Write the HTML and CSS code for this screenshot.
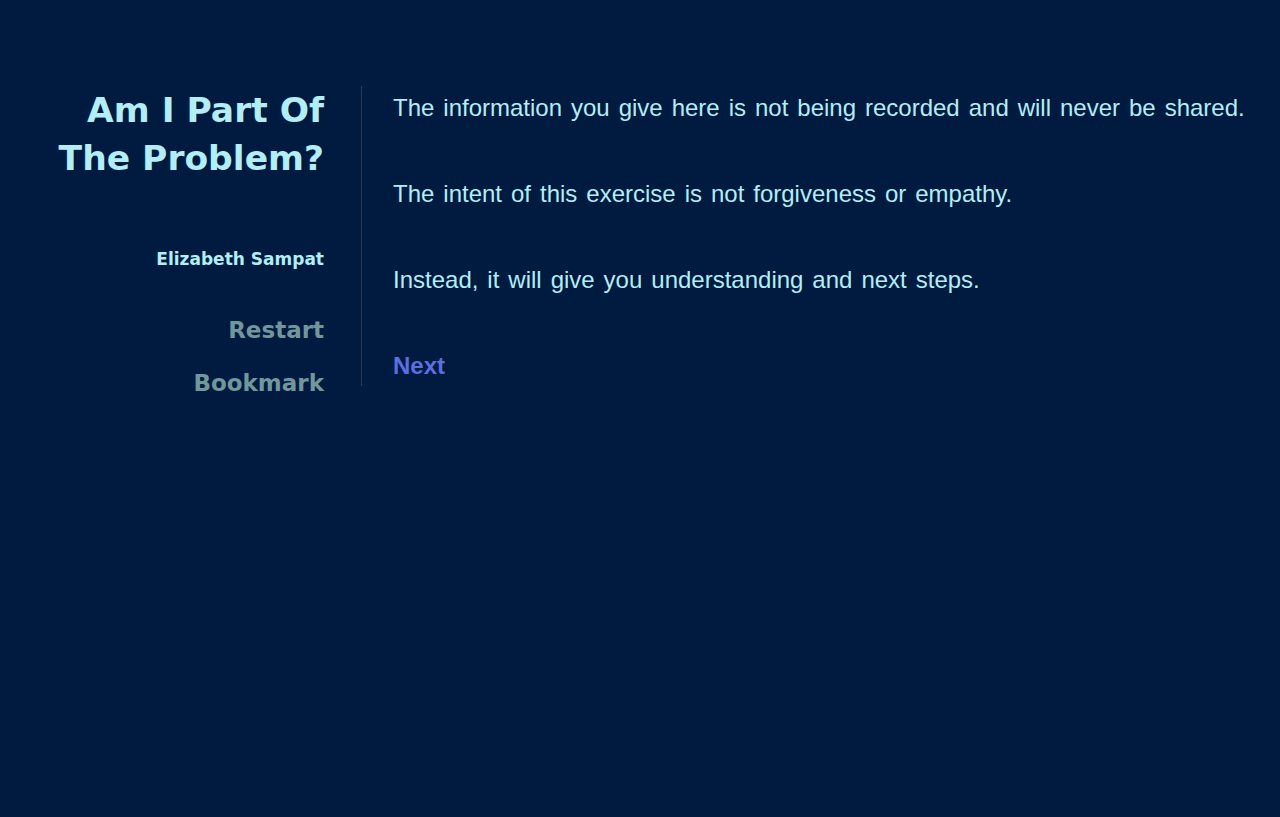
FILE: index.html
```html
<!DOCTYPE html>
<html lang="en">
<head>
<meta charset="utf-8">
<title>Am I Part Of The Problem?</title>
<link rel="stylesheet" href="styles.css">
</head>
<body>
<div class="page">
  <aside class="sidebar">
    <h1 class="title">Am I Part Of<br>The Problem?</h1>
    <div class="author">Elizabeth Sampat</div>
    <nav class="nav">
      <a class="nav-link" href="#">Restart</a>
      <a class="nav-link" href="#">Bookmark</a>
    </nav>
  </aside>
  <main class="content">
    <p class="para">The information you give here is not being recorded and will never be shared.</p>
    <p class="para">The intent of this exercise is not forgiveness or empathy.</p>
    <p class="para">Instead, it will give you understanding and next steps.</p>
    <a class="next" href="#">Next</a>
  </main>
</div>
</body>
</html>
```

FILE: styles.css
```css
html, body {
  margin: 0;
  padding: 0;
  background: #011a40;
  height: 100%;
}
body {
  font-family: "Liberation Sans", Arial, sans-serif;
  color: #b2eef5;
}
.page {
  display: flex;
  align-items: flex-start;
  padding-top: 86px;
}
.sidebar {
  width: 324px;
  flex: none;
  text-align: right;
  font-family: "DejaVu Sans", Verdana, sans-serif;
  font-weight: bold;
}
.title {
  margin: 0;
  font-size: 34.5px;
  line-height: 48px;
  font-weight: bold;
  color: #b2eef5;
}
.author {
  margin-top: 67px;
  font-size: 17px;
  line-height: 20px;
  color: #b2eef5;
}
.nav {
  display: flex;
  flex-direction: column;
  align-items: flex-end;
  gap: 27px;
  margin-top: 48px;
}
.nav-link {
  font-size: 23px;
  line-height: 26px;
  color: #71979c;
  text-decoration: none;
}
.content {
  margin-left: 37px;
  border-left: 1px solid #2b3a56;
  padding: 8px 0 6px 31px;
}
.para {
  margin: 0 0 58px;
  font-size: 24px;
  line-height: 28px;
  word-spacing: 2.3px;
  color: #b2eef5;
}
.next {
  display: block;
  font-size: 24px;
  line-height: 28px;
  font-weight: bold;
  color: #5b6fe0;
  text-decoration: none;
}
```
